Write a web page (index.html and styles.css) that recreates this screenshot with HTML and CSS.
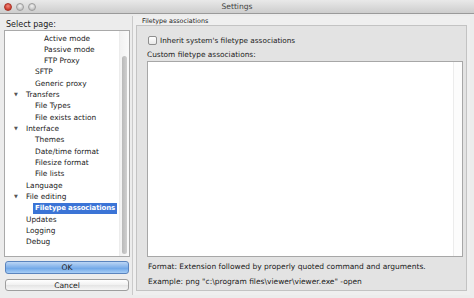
FILE: index.html
```html
<!DOCTYPE html>
<html>
<head>
<meta charset="utf-8">
<link rel="stylesheet" href="styles.css">
</head>
<body>
<div class="window">
  <div class="titlebar">
    <div class="lights">
      <span class="light red"></span>
      <span class="light gray"></span>
      <span class="light gray"></span>
    </div>
    <div class="title">Settings</div>
  </div>
  <div class="main">
    <div class="sidebar">
      <div class="sel-label">Select page:</div>
      <div class="tree">
        <div class="items">
          <div class="row l3">Active mode</div>
          <div class="row l3">Passive mode</div>
          <div class="row l3">FTP Proxy</div>
          <div class="row l2">SFTP</div>
          <div class="row l2">Generic proxy</div>
          <div class="row l1"><span class="arrow">&#9660;</span>Transfers</div>
          <div class="row l2">File Types</div>
          <div class="row l2">File exists action</div>
          <div class="row l1"><span class="arrow">&#9660;</span>Interface</div>
          <div class="row l2">Themes</div>
          <div class="row l2">Date/time format</div>
          <div class="row l2">Filesize format</div>
          <div class="row l2">File lists</div>
          <div class="row l1">Language</div>
          <div class="row l1"><span class="arrow">&#9660;</span>File editing</div>
          <div class="row sel-row"><span class="selected">Filetype associations</span></div>
          <div class="row l1">Updates</div>
          <div class="row l1">Logging</div>
          <div class="row l1">Debug</div>
        </div>
        <div class="scrollbar"><div class="thumb"></div></div>
      </div>
      <div class="btn ok">OK</div>
      <div class="btn cancel">Cancel</div>
    </div>
    <div class="pane">
      <div class="group-title">Filetype associations</div>
      <div class="group">
        <div class="check-row"><span class="checkbox"></span><span class="check-text">Inherit system's filetype associations</span></div>
        <div class="custom-label">Custom filetype associations:</div>
        <div class="textarea"><div class="ta-edge"></div></div>
        <div class="hint">Format: Extension followed by properly quoted command and arguments.</div>
        <div class="hint">Example: png "c:\program files\viewer\viewer.exe" -open</div>
      </div>
    </div>
  </div>
</div>
</body>
</html>
```

FILE: styles.css
```css
* { box-sizing: border-box; }
html, body { margin: 0; padding: 0; }
body {
  width: 474px;
  height: 298px;
  overflow: hidden;
  background: #ececec;
  font-family: "DejaVu Sans", "Open Sans", sans-serif;
  font-size: 7.4px;
  color: #1a1a1a;
}
.window { width: 474px; height: 298px; display: flex; flex-direction: column; }
.titlebar {
  height: 14px;
  flex: none;
  background: linear-gradient(#e9e9e9, #cdcdcd);
  border-bottom: 1px solid #9a9a9a;
  display: flex;
  align-items: center;
  position: relative;
}
.lights { display: flex; gap: 4px; padding-left: 4px; }
.light { width: 8px; height: 8px; border-radius: 50%; display: block; }
.light.red { background: radial-gradient(circle at 50% 35%, #f08a7e, #cf3a2c 70%); border: 0.5px solid #a83226; }
.light.gray { background: radial-gradient(circle at 50% 35%, #f2f2f2, #c4c4c4 70%); border: 0.5px solid #9c9c9c; }
.title {
  position: absolute;
  left: 0; right: 0; top: 0;
  text-align: center;
  line-height: 14px;
  font-size: 7.6px;
  color: #444;
}
.main { display: flex; flex: 1; }
.sidebar { width: 126px; margin-left: 4px; display: flex; flex-direction: column; }
.sel-label { height: 16px; padding: 6px 0 0 2px; font-size: 8px; line-height: 10px; }
.tree {
  height: 227px;
  background: #fff;
  border: 1px solid #a9a9a9;
  display: flex;
}
.items { flex: 1; padding-top: 1.5px; min-width: 0; }
.row { height: 11.33px; line-height: 11.33px; white-space: nowrap; position: relative; }
.l1 { padding-left: 21px; }
.l2 { padding-left: 30px; }
.l3 { padding-left: 39px; }
.sel-row { padding-left: 28px; display: flex; align-items: center; }
.arrow {
  position: absolute;
  left: 9px;
  font-size: 5px;
  color: #555;
}
.selected {
  background: #3b74d6;
  color: #fff;
  padding: 0 2px;
  display: block;
  height: 11px;
  line-height: 11px;
  font-weight: bold;
  font-size: 7px;
  letter-spacing: -0.15px;
}
.scrollbar {
  width: 10px;
  flex: none;
  background: linear-gradient(90deg, #f2f2f2, #fafafa);
  border-left: 1px solid #ececec;
  padding: 25px 2px 2px 2px;
}
.thumb { height: 100%; border-radius: 3px; background: linear-gradient(90deg, #b9b9b9, #cfcfcf); }
.btn {
  height: 13px;
  border-radius: 3px;
  text-align: center;
  line-height: 12px;
  font-size: 7.6px;
  margin-left: 1px;
  width: 124px;
}
.ok {
  margin-top: 4px;
  background: linear-gradient(#bcd6f5, #7fb0ea 50%, #6aa3e6 51%, #a6cdf6);
  border: 1px solid #5a84be;
}
.cancel {
  margin-top: 5px;
  height: 12px;
  line-height: 11px;
  background: linear-gradient(#ffffff, #f0f0f0 50%, #e4e4e4 51%, #f6f6f6);
  border: 1px solid #9e9e9e;
}
.pane {
  margin-left: 2px;
  margin-top: 2px;
  width: 338px;
  height: 279px;
  background: #efefef;
  border-left: 1px solid #cacaca;
  padding-left: 3px;
}
.group-title { height: 9px; font-size: 6.4px; line-height: 11px; padding-left: 6px; color: #222; }
.group {
  width: 331px;
  height: 266px;
  background: #e3e3e3;
  border: 1px solid #c3c3c3;
  padding: 0 0 0 10px;
}
.check-row { display: flex; align-items: center; margin-top: 9px; height: 11px; }
.checkbox {
  width: 9px; height: 9px;
  border: 1px solid #8e8e8e;
  border-radius: 2px;
  background: linear-gradient(#ffffff, #e8e8e8);
  margin: 0 3px 0 1px;
  display: block;
}
.check-text { font-size: 7.3px; }
.custom-label { margin-top: 3px; height: 12px; line-height: 12px; font-size: 7.4px; }
.textarea {
  width: 316px;
  height: 196px;
  background: #fff;
  border: 1px solid #a7a7a7;
  display: flex;
  justify-content: flex-end;
}
.ta-edge { width: 9px; border-left: 1px solid #ececec; background: #fcfcfc; }
.hint { height: 15px; line-height: 15px; padding-left: 1px; font-size: 7.5px; }
.textarea + .hint { margin-top: 2px; }
```
